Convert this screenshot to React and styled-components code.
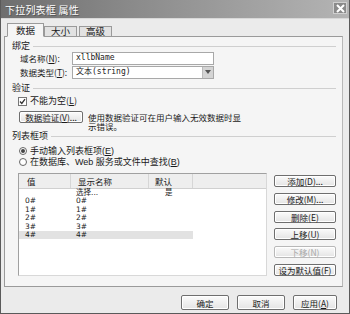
import styled, { createGlobalStyle } from "styled-components";

const GlobalStyle = createGlobalStyle`
  html, body {
    margin: 0;
    padding: 0;
    background: #ffffff;
  }
  body {
    font-family: "Noto Sans CJK SC", "DejaVu Sans", sans-serif;
    font-size: 9px;
    line-height: 1.1;
    color: #1a1a1a;
  }
`;

const rows = [
  { value: "", name: "选择...", def: "是" },
  { value: "0#", name: "0#", def: "" },
  { value: "1#", name: "1#", def: "" },
  { value: "2#", name: "2#", def: "" },
  { value: "3#", name: "3#", def: "" },
  { value: "4#", name: "4#", def: "", selected: true },
];

const sideButtons = [
  { label: "添加(D)..." },
  { label: "修改(M)..." },
  { label: "删除(E)" },
  { label: "上移(U)" },
  { label: "下移(N)", disabled: true },
  { label: "设为默认值(F)" },
];

const App = () => {
  return (
    <>
      <GlobalStyle />
      <Window>
        <TitleBar>
          <Title>下拉列表框 属性</Title>
          <CloseBtn>
            <svg width="9" height="9" viewBox="0 0 9 9">
              <path d="M1 1 L8 8 M8 1 L1 8" stroke="#fff" strokeWidth="2" />
            </svg>
          </CloseBtn>
        </TitleBar>
        <Body>
          <TabStrip>
            <Tab $active>数据</Tab>
            <Tab>大小</Tab>
            <Tab>高级</Tab>
          </TabStrip>
          <Panel>
            <GroupHead>
              <span>绑定</span>
            </GroupHead>
            <FieldRow>
              <FieldLabel>域名称(<u>N</u>):</FieldLabel>
              <TextBox>xllbName</TextBox>
            </FieldRow>
            <FieldRow>
              <FieldLabel>数据类型(<u>T</u>):</FieldLabel>
              <TextBox>
                文本(string)
                <DropArrow>
                  <svg width="6" height="4" viewBox="0 0 6 4">
                    <path d="M0 0 L6 0 L3 4 Z" fill="#555" />
                  </svg>
                </DropArrow>
              </TextBox>
            </FieldRow>

            <GroupHead $gap={4}>
              <span>验证</span>
            </GroupHead>
            <CheckRow>
              <CheckBox>
                <svg width="7" height="7" viewBox="0 0 7 7">
                  <path d="M1 3.5 L2.8 5.5 L6 1.2" stroke="#333" strokeWidth="1.3" fill="none" />
                </svg>
              </CheckBox>
              <span>不能为空(<u>L</u>)</span>
            </CheckRow>
            <ValidateRow>
              <PushButton $w={64}>
                <span>数据验证(<u>V</u>)...</span>
              </PushButton>
              <Hint>使用数据验证可在用户输入无效数据时显示错误。</Hint>
            </ValidateRow>

            <GroupHead $gap={4}>
              <span>列表框项</span>
            </GroupHead>
            <RadioRow $first>
              <Radio $on />
              <span>手动输入列表框项(<u>E</u>)</span>
            </RadioRow>
            <RadioRow>
              <Radio />
              <span>在数据库、Web 服务或文件中查找(<u>B</u>)</span>
            </RadioRow>

            <ListArea>
              <Table>
                <HeadRow>
                  <Col $w={52} $pad={8}>值</Col>
                  <Col $w={78} $pad={7}>显示名称</Col>
                  <Col $w={44} $pad={6}>默认</Col>
                  <Col $w={70} $last />
                </HeadRow>
                {rows.map((r, i) => (
                  <DataRow key={i} $selected={r.selected}>
                    <Cell $w={52} $pad={6}>{r.value}</Cell>
                    <Cell $w={78} $pad={5}>{r.name}</Cell>
                    <Cell $w={44} $pad={16}>{r.def}</Cell>
                  </DataRow>
                ))}
              </Table>
              <SideButtons>
                {sideButtons.map((b) => (
                  <SideButton key={b.label} $w={62} $disabled={b.disabled}>
                    {b.label}
                  </SideButton>
                ))}
              </SideButtons>
            </ListArea>
          </Panel>
          <Footer>
            <PushButton $w={48} $h={15}>确定</PushButton>
            <PushButton $w={48} $h={15}>取消</PushButton>
            <PushButton $w={44} $h={15}>
              <span>应用(<u>A</u>)</span>
            </PushButton>
          </Footer>
        </Body>
      </Window>
    </>
  );
};

export default App;

// window frame
const Window = styled.div`
  width: 350px;
  height: 314px;
  box-sizing: border-box;
  background: #ebebeb;
  border: 1px solid #5a5a5a;
  border-top: none;
  display: flex;
  flex-direction: column;
`;

const TitleBar = styled.div`
  height: 18px;
  flex: none;
  display: flex;
  align-items: center;
  justify-content: space-between;
  padding: 0 2px 0 4px;
  background: linear-gradient(to right, #6e6e6e 0%, #8c8c8c 40%, #b4b4b4 100%);
  border-bottom: 1px solid #d8d8d8;
`;

const Title = styled.div`
  color: #ffffff;
  font-size: 10px;
  letter-spacing: 0.2px;
  text-shadow: 1px 1px 0 #555;
`;

const CloseBtn = styled.div`
  width: 14px;
  height: 12px;
  margin-top: -2px;
  display: flex;
  align-items: center;
  justify-content: center;
  background: #8a8a8a;
  border: 1px solid #d0d0d0;
  box-sizing: border-box;
`;

const Body = styled.div`
  flex: 1;
  display: flex;
  flex-direction: column;
  padding: 4px 6px 0 3px;
`;

// tabs
const TabStrip = styled.div`
  display: flex;
  align-items: flex-end;
  padding-left: 3px;
  height: 14px;
  position: relative;
  z-index: 1;
  margin-bottom: -1px;
`;

const Tab = styled.div`
  height: ${(p) => (p.$active ? 14 : 11)}px;
  padding: 0 ${(p) => (p.$active ? 8 : 6)}px;
  margin-right: ${(p) => (p.$active ? 0 : 2)}px;
  box-sizing: border-box;
  display: flex;
  align-items: center;
  border: 1px solid #9a9a9a;
  border-bottom: ${(p) => (p.$active ? "1px solid #f5f5f5" : "1px solid #9a9a9a")};
  background: ${(p) => (p.$active ? "#f5f5f5" : "#e2e2e2")};
  font-size: 9.5px;
`;

const Panel = styled.div`
  height: 251px;
  box-sizing: border-box;
  border: 1px solid #9a9a9a;
  border-right-color: #b8b8b8;
  background: #f5f5f5;
  padding: 4px 4px 0 7px;
  display: flex;
  flex-direction: column;
`;

const GroupHead = styled.div`
  height: 10px;
  line-height: 10px;
  margin-top: ${(p) => p.$gap || 0}px;
  display: flex;
  align-items: center;
  gap: 3px;
  font-size: 9px;
  &::after {
    content: "";
    flex: 1;
    border-top: 1px solid #cfcfcf;
    margin-right: 2px;
  }
`;

const FieldRow = styled.div`
  height: 14px;
  display: flex;
  align-items: center;
  padding-left: 8px;
  &:first-of-type {
    margin-top: 3px;
  }
`;

const FieldLabel = styled.div`
  width: 52px;
  font-size: 8.5px;
  line-height: 10px;
`;

const TextBox = styled.div`
  width: 142px;
  height: 13px;
  box-sizing: border-box;
  border: 1px solid #a8a8a8;
  background: #ffffff;
  display: flex;
  align-items: center;
  padding-left: 3px;
  font-size: 8px;
  line-height: 10px;
  font-family: "DejaVu Sans Mono", "Noto Sans CJK SC", monospace;
  position: relative;
`;

const DropArrow = styled.div`
  position: absolute;
  right: 0;
  top: 0;
  width: 10px;
  height: 11px;
  background: #d4d4d4;
  border-left: 1px solid #bbb;
  display: flex;
  align-items: center;
  justify-content: center;
`;

const CheckRow = styled.div`
  height: 10px;
  line-height: 10px;
  margin-top: 3px;
  padding-left: 6px;
  display: flex;
  align-items: center;
  gap: 3px;
  font-size: 9px;
`;

const CheckBox = styled.div`
  width: 9px;
  height: 9px;
  box-sizing: border-box;
  border: 1px solid #777;
  background: #fff;
  display: flex;
  align-items: center;
  justify-content: center;
`;

const ValidateRow = styled.div`
  height: 16px;
  margin-top: 5px;
  padding-left: 7px;
  display: flex;
  align-items: flex-start;
  gap: 5px;
`;

const PushButton = styled.div`
  width: ${(p) => p.$w}px;
  height: ${(p) => p.$h || 12}px;
  box-sizing: border-box;
  border: 1px solid #6e6e6e;
  border-radius: 2px;
  background: linear-gradient(#fbfbfb, #e4e4e4);
  box-shadow: inset 0 0 0 1px #ffffff;
  display: flex;
  align-items: center;
  justify-content: center;
  font-size: 8.5px;
  line-height: 10px;
  flex: none;
`;

const Hint = styled.div`
  width: 160px;
  font-size: 8.5px;
  line-height: 8.5px;
  padding-top: 2px;
`;

const RadioRow = styled.div`
  height: 10.5px;
  line-height: 10px;
  margin-top: ${(p) => (p.$first ? 5 : 0)}px;
  padding-left: 7px;
  display: flex;
  align-items: center;
  gap: 3px;
  font-size: 9px;
  font-family: "Liberation Sans", "Noto Sans CJK SC", sans-serif;
`;

const Radio = styled.div`
  width: 8px;
  height: 8px;
  box-sizing: border-box;
  border: 1px solid #666;
  border-radius: 50%;
  background: #fff;
  display: flex;
  align-items: center;
  justify-content: center;
  &::after {
    content: "";
    width: 4px;
    height: 4px;
    border-radius: 50%;
    background: ${(p) => (p.$on ? "#444" : "transparent")};
  }
`;

// list of items
const ListArea = styled.div`
  display: flex;
  gap: 7px;
  margin-top: 6px;
  padding-left: 6px;
  height: 103px;
`;

const Table = styled.div`
  width: 249px;
  box-sizing: border-box;
  border: 1px solid #a0a0a0;
  border-right-color: #d8d8d8;
  border-bottom-color: #d8d8d8;
  background: #ffffff;
`;

const HeadRow = styled.div`
  height: 14px;
  display: flex;
  background: #eeeeee;
  border-bottom: 1px solid #d0d0d0;
`;

const Col = styled.div`
  width: ${(p) => p.$w}px;
  box-sizing: border-box;
  padding-left: ${(p) => p.$pad || 0}px;
  display: flex;
  align-items: center;
  font-size: 8.5px;
  line-height: 10px;
  border-right: ${(p) => (p.$last ? "none" : "1px solid #d6d6d6")};
`;

const DataRow = styled.div`
  height: 8.4px;
  width: 174px;
  display: flex;
  background: ${(p) => (p.$selected ? "#e2e2e2" : "transparent")};
`;

const Cell = styled.div`
  width: ${(p) => p.$w}px;
  box-sizing: border-box;
  padding-left: ${(p) => p.$pad}px;
  font-size: 7.5px;
  line-height: 8.4px;
  font-family: "DejaVu Sans", "Noto Sans CJK SC", sans-serif;
`;

const SideButtons = styled.div`
  width: 62px;
  padding-top: 2px;
  display: flex;
  flex-direction: column;
  justify-content: space-between;
`;

const SideButton = styled(PushButton)`
  color: ${(p) => (p.$disabled ? "#a8a8a8" : "#1a1a1a")};
  border-color: ${(p) => (p.$disabled ? "#b8b8b8" : "#6e6e6e")};
`;

const Footer = styled.div`
  display: flex;
  justify-content: flex-end;
  gap: 8px;
  margin-top: 8px;
  padding-right: 6px;
`;
